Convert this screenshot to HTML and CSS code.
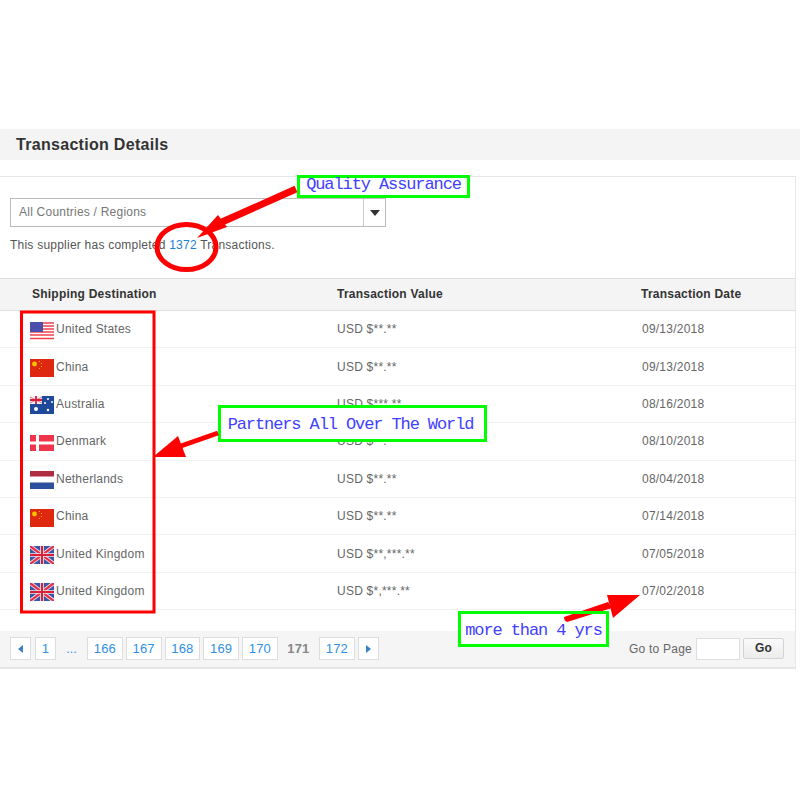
FILE: index.html
```html
<!DOCTYPE html>
<html lang="en">
<head>
<meta charset="utf-8">
<title>Transaction Details</title>
<link rel="stylesheet" href="styles.css">
</head>
<body>
<svg class="defs" width="0" height="0" aria-hidden="true">
  <symbol id="us" viewBox="0 0 24 18">
    <rect width="24" height="18" fill="#fff"/>
    <path d="M0 1h24M0 4h24M0 7h24M0 10h24M0 13h24M0 16.500h24" stroke="#f0414f" stroke-width="1.600"/>
    <rect width="13" height="10" fill="#4a4fae"/>
  </symbol>
  <symbol id="cn" viewBox="0 0 24 18">
    <rect width="24" height="18" fill="#de2910"/>
    <circle cx="4.500" cy="5" r="2.400" fill="#ffc400"/>
    <path d="M9 2h1v1H9zM11 4h1v1h-1zM11 7h1v1h-1zM9 9h1v1H9z" fill="#f5b400"/>
  </symbol>
  <symbol id="au" viewBox="0 0 24 18">
    <rect width="24" height="18" fill="#1f4a9c"/>
    <rect width="12" height="8" fill="#f2f2f6"/>
    <path d="M0 4h12M6 0v8" stroke="#d8203a" stroke-width="1.800"/>
    <path d="M0 1l12 6M12 1L0 7" stroke="#d8203a" stroke-width=".6"/>
    <circle cx="6" cy="13" r="2" fill="#fff"/>
    <circle cx="18" cy="3" r="1" fill="#fff"/>
    <circle cx="22" cy="6" r="1" fill="#fff"/>
    <circle cx="15" cy="7" r="1" fill="#fff"/>
    <circle cx="18" cy="14" r="1.200" fill="#fff"/>
  </symbol>
  <symbol id="dk" viewBox="0 0 24 18">
    <rect y="1" width="24" height="16" fill="#f0344c"/>
    <path d="M7.500 0v18M0 9h24" stroke="#fff" stroke-width="3"/>
  </symbol>
  <symbol id="nl" viewBox="0 0 24 18">
    <rect width="24" height="18" fill="#fff"/>
    <rect width="24" height="5.500" fill="#ae2b40"/>
    <rect y="11.500" width="24" height="6.500" fill="#2c4f9e"/>
  </symbol>
  <symbol id="gb" viewBox="0 0 24 18">
    <rect width="24" height="18" fill="#3a56a8"/>
    <path d="M0 0l24 18M24 0L0 18" stroke="#f3d9dc" stroke-width="4"/>
    <path d="M0 0l24 18M24 0L0 18" stroke="#e0304a" stroke-width="2.200"/>
    <path d="M12 0v18M0 9h24" stroke="#f7e6e8" stroke-width="3.600"/>
    <path d="M12 0v18M0 9h24" stroke="#d8203a" stroke-width="2"/>
  </symbol>
</svg>

<main class="page">
  <h1 class="title">Transaction Details</h1>
  <section class="panel">
    <div class="filter">
      <div class="select">
        <span class="select-text">All Countries / Regions</span>
        <span class="select-btn"><span class="caret"></span></span>
      </div>
      <p class="summary">This supplier has completed <a class="link">1372</a> Transactions.</p>
    </div>
    <div class="row head">
      <span class="col-dest">Shipping Destination</span>
      <span>Transaction Value</span>
      <span class="col-date">Transaction Date</span>
    </div>
    <div class="row"><span class="country"><svg class="flag"><use href="#us"/></svg>United States</span><span>USD $**.**</span><span class="col-date">09/13/2018</span></div>
    <div class="row"><span class="country"><svg class="flag"><use href="#cn"/></svg>China</span><span>USD $**.**</span><span class="col-date">09/13/2018</span></div>
    <div class="row"><span class="country"><svg class="flag"><use href="#au"/></svg>Australia</span><span>USD $***.**</span><span class="col-date">08/16/2018</span></div>
    <div class="row"><span class="country"><svg class="flag"><use href="#dk"/></svg>Denmark</span><span>USD $**.**</span><span class="col-date">08/10/2018</span></div>
    <div class="row"><span class="country"><svg class="flag"><use href="#nl"/></svg>Netherlands</span><span>USD $**.**</span><span class="col-date">08/04/2018</span></div>
    <div class="row"><span class="country"><svg class="flag"><use href="#cn"/></svg>China</span><span>USD $**.**</span><span class="col-date">07/14/2018</span></div>
    <div class="row"><span class="country"><svg class="flag"><use href="#gb"/></svg>United Kingdom</span><span>USD $**,***.**</span><span class="col-date">07/05/2018</span></div>
    <div class="row"><span class="country"><svg class="flag"><use href="#gb"/></svg>United Kingdom</span><span>USD $*,***.**</span><span class="col-date">07/02/2018</span></div>
    <div class="pager">
      <nav class="pages">
        <a class="pg arrow"><span class="tri tri-left"></span></a>
        <a class="pg first">1</a>
        <span class="dots">...</span>
        <a class="pg num">166</a>
        <a class="pg num">167</a>
        <a class="pg num">168</a>
        <a class="pg num">169</a>
        <a class="pg num">170</a>
        <span class="current">171</span>
        <a class="pg num">172</a>
        <a class="pg arrow"><span class="tri tri-right"></span></a>
      </nav>
      <div class="goto">
        <span>Go to Page</span>
        <span class="go-input"></span>
        <span class="go-btn">Go</span>
      </div>
    </div>
  </section>
</main>

<div class="note note-quality">Quality Assurance</div>
<div class="note note-partners">Partners All Over The World</div>
<div class="note note-years">more than 4 yrs</div>
<svg class="ink" width="800" height="800" viewBox="0 0 800 800" aria-hidden="true">
  <ellipse cx="186.500" cy="247" rx="29.500" ry="22.500" fill="none" stroke="#f00" stroke-width="5"/>
  <path d="M296 189L222 222" stroke="#f00" stroke-width="7" fill="none"/>
  <path d="M197 238L218 215L227 227Z" fill="#f00"/>
  <rect x="21.500" y="312" width="132.500" height="300" fill="none" stroke="#f00" stroke-width="3"/>
  <path d="M218 433L178 447" stroke="#f00" stroke-width="5" fill="none"/>
  <path d="M153 457L178 436L186 457Z" fill="#f00"/>
  <path d="M564 617Q564 621 567 622L612 608L608 602Z" fill="#f00"/>
  <path d="M640 595L607 595L613 618Z" fill="#f00"/>
  <rect x="459.500" y="612.500" width="148" height="33" fill="none" stroke="#0f0" stroke-width="3"/>
</svg>
</body>
</html>
```
FILE: styles.css
```css
* { box-sizing: border-box; }
html, body { margin: 0; padding: 0; }
body {
  position: relative;
  width: 800px;
  height: 800px;
  overflow: hidden;
  background: #fff;
  color: #666;
  font-family: "Liberation Sans", Arial, sans-serif;
  font-size: 12px;
  letter-spacing: .23px;
}
.defs { position: absolute; }
.page { padding-top: 129px; }
.title {
  margin: 0;
  height: 31px;
  padding-left: 16px;
  background: #f4f4f4;
  color: #333;
  font-size: 16px;
  font-weight: bold;
  line-height: 31px;
  letter-spacing: .3px;
}
.panel {
  width: 796px;
  margin-top: 16px;
  border-top: 1px solid #e6e6e6;
  border-right: 1px solid #e6e6e6;
}
.filter { padding: 21px 0 0 10px; height: 101px; }
.select {
  display: flex;
  width: 376px;
  height: 29px;
  border: 1px solid #bbb;
  line-height: 27px;
}
.select-text { flex: 1; padding-left: 8px; color: #777; }
.select-btn {
  display: flex;
  width: 22px;
  align-items: center;
  justify-content: center;
  border-left: 1px solid #ccc;
}
.caret {
  border-left: 5px solid transparent;
  border-right: 5px solid transparent;
  border-top: 6px solid #333;
}
.summary { margin: 11px 0 0; line-height: 15px; color: #555; }
.link { color: #1a7fd6; }
.row {
  display: grid;
  grid-template-columns: 337px 304px 1fr;
  align-items: center;
  height: 37.400px;
  border-bottom: 1px solid #f2f2f2;
  color: #666;
}
.head {
  height: 33px;
  padding-bottom: 2px;
  background: #f4f4f4;
  border-top: 1px solid #e0e0e0;
  border-bottom: 1px solid #e0e0e0;
  color: #333;
  font-weight: bold;
}
.col-dest { padding-left: 32px; }
.col-date { padding-left: 1px; }
.head .col-date { padding-left: 0; }
.country { display: flex; align-items: center; padding-left: 30px; }
.flag { width: 24px; height: 18px; margin-top: 3px; margin-right: 2px; flex: none; }
.pager {
  display: flex;
  align-items: center;
  justify-content: space-between;
  height: 38px;
  margin-top: 21px;
  padding: 0 11px 1px 10px;
  background: #f5f5f5;
  border-bottom: 2px solid #e6e6e6;
}
.pages { display: flex; align-items: center; gap: 3px; }
.pg {
  display: flex;
  width: 21px;
  height: 23px;
  align-items: center;
  justify-content: center;
  background: #fff;
  border: 1px solid #ddd;
  color: #2e8fe8;
  font-size: 13px;
}
.pg.first { margin-left: 1px; }
.pg.num { width: 35.750px; }
.dots { width: 25px; text-align: center; color: #2e8fe8; }
.current { width: 35.250px; text-align: center; color: #888; font-size: 13px; font-weight: bold; }
.tri { border-top: 4px solid transparent; border-bottom: 4px solid transparent; }
.tri-left { border-right: 5px solid #3a80c8; }
.tri-right { border-left: 5px solid #3a80c8; }
.goto { display: flex; align-items: center; color: #666; }
.go-input {
  width: 44px;
  height: 22px;
  margin-left: 4px;
  background: #fff;
  border: 1px solid #ddd;
}
.go-btn {
  width: 41px;
  height: 21px;
  margin-left: 3px;
  background: linear-gradient(#fafafa, #ececec);
  border: 1px solid #d4d4d4;
  border-radius: 2px;
  color: #333;
  font-weight: bold;
  line-height: 19px;
  text-align: center;
}
.ink { position: absolute; left: 0; top: 0; }
.note {
  position: absolute;
  background: #fff;
  border: 3px solid #0f0;
  color: #4040ff;
  font-family: "Liberation Mono", monospace;
  font-size: 17px;
  letter-spacing: -1.100px;
  white-space: nowrap;
  text-align: center;
}
.note-quality { left: 297px; top: 175px; width: 173px; height: 23px; line-height: 14px; }
.note-partners { left: 218px; top: 405px; width: 269px; height: 37px; padding-right: 4px; line-height: 33px; }
.note-years { left: 458px; top: 611px; width: 151px; height: 36px; line-height: 33px; border-color: transparent; background-clip: padding-box; }
```
